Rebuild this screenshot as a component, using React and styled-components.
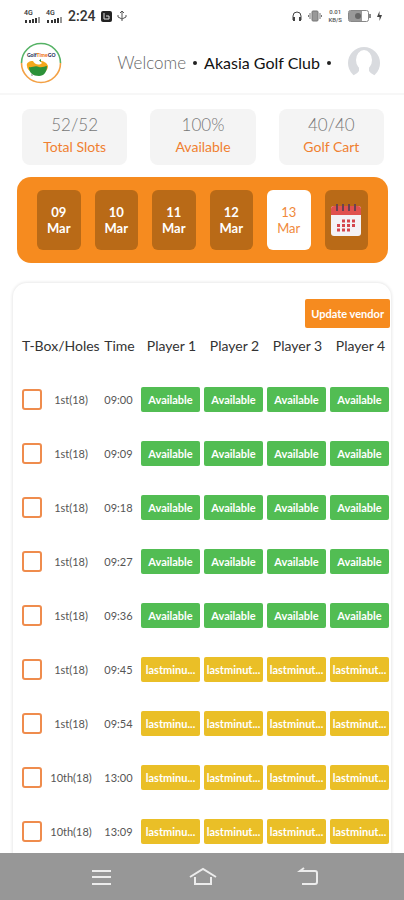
import React from 'react';
import styled, { createGlobalStyle } from 'styled-components';

const GlobalStyle = createGlobalStyle`
  * {
    box-sizing: border-box;
  }
  body {
    margin: 0;
    background: #fff;
    font-family: Lato, 'Liberation Sans', sans-serif;
    color: #333;
  }
  button {
    font-family: inherit;
    border: 0;
    padding: 0;
    cursor: pointer;
  }
`;

const Screen = styled.div`
  display: flex;
  flex-direction: column;
  height: 100vh;
`;

const StatusBar = styled.div`
  display: flex;
  align-items: center;
  justify-content: space-between;
  flex: none;
  height: 32px;
  padding: 0 22px 0 24px;
`;

const StatusGroup = styled.div`
  display: flex;
  align-items: center;
  gap: ${(props) => props.$gap}px;
  svg {
    display: block;
  }
`;

const Signal = styled.div`
  display: flex;
  flex-direction: column;
  font: 500 7px/7px Roboto, sans-serif;
  color: #333;
`;

const Clock = styled.time`
  font: 500 14px/16px Roboto, sans-serif;
  color: #333;
`;

const NetSpeed = styled.div`
  display: grid;
  font: 500 6px/8px Roboto, sans-serif;
  color: #555;
  text-align: center;
`;

const Header = styled.header`
  display: flex;
  align-items: center;
  flex: none;
  height: 63px;
  padding: 0 23px 0 20px;
  border-bottom: 2px solid #f7f7f7;
  .logo {
    display: block;
    margin-right: auto;
  }
`;

const Welcome = styled.p`
  display: flex;
  align-items: center;
  gap: 7px;
  margin: 0 16px 0 0;
  font-size: 16px;
  line-height: 20px;
  color: #111;
  span {
    font-size: 17px;
    font-weight: 300;
    color: #666;
  }
`;

const Dot = styled.i`
  width: 4px;
  height: 4px;
  border-radius: 50%;
  background: #222;
`;

const Main = styled.main`
  display: flex;
  flex-direction: column;
  flex: 1;
  min-height: 0;
  overflow-y: auto;
  scrollbar-width: none;
`;

const Stats = styled.section`
  display: grid;
  grid-template-columns: repeat(3, 1fr);
  flex: none;
  gap: 23px;
  padding: 14px 20px 12px 22px;
`;

const Stat = styled.div`
  height: 56px;
  padding-top: 5px;
  border-radius: 8px;
  background: #f4f4f4;
  text-align: center;
  strong {
    display: block;
    font-size: 17px;
    font-weight: 300;
    line-height: 22px;
    color: #777;
  }
  span {
    display: block;
    font-size: 14px;
    line-height: 22px;
    color: #f08030;
  }
`;

const DateStrip = styled.nav`
  display: grid;
  grid-template-columns: repeat(6, 1fr);
  flex: none;
  gap: 14px;
  margin: 0 16px 20px 17px;
  padding: 13px 20px;
  border-radius: 14px;
  background: #f68b1f;
`;

const Day = styled.button`
  display: flex;
  flex-direction: column;
  align-items: center;
  justify-content: center;
  height: 60px;
  border-radius: 6px;
  background: ${(props) => (props.$active ? '#fff' : '#b96a17')};
  color: ${(props) => (props.$active ? '#f0893a' : '#fff')};
  font-size: 13px;
  font-weight: ${(props) => (props.$active ? 400 : 700)};
  line-height: 16px;
`;

const Card = styled.section`
  flex: 1 0 auto;
  margin: 0 13px;
  padding: 16px 0 0 7px;
  border-radius: 14px 14px 0 0;
  box-shadow: 0 0 3px 1px #e9e9e9;
`;

const UpdateButton = styled.button`
  display: block;
  height: 29px;
  margin: 0 1px 0 auto;
  padding: 0 6px;
  border-radius: 2px;
  background: #f68b1f;
  color: #fff;
  font-size: 11px;
  font-weight: 700;
`;

const Table = styled.table`
  width: 100%;
  table-layout: fixed;
  border-collapse: collapse;
  th {
    height: 44px;
    padding: 0 0 10px 2px;
    font-size: 14px;
    font-weight: 400;
    color: #333;
    white-space: nowrap;
  }
  td {
    height: 54px;
    padding: 0 2px;
    font-size: 11px;
    color: #555;
    text-align: center;
    white-space: nowrap;
  }
`;

const Col = styled.col`
  width: ${(props) => props.$width}px;
`;

const Check = styled.input`
  appearance: none;
  display: block;
  width: 20px;
  height: 21px;
  margin: 0;
  border: 2px solid #ef8c4d;
  border-radius: 3px;
  background: #fff;
  &:checked {
    background: #f68b1f;
  }
`;

const Slot = styled.button`
  display: block;
  width: 100%;
  height: 25px;
  border-radius: 2px;
  background: ${(props) => (props.$last ? '#eabf27' : '#52bd53')};
  color: #fff;
  font-size: 11px;
  font-weight: 700;
`;

const BottomNav = styled.nav`
  display: flex;
  align-items: center;
  justify-content: center;
  flex: none;
  gap: 73px;
  height: 47px;
  background: #979797;
  button {
    width: 30px;
    height: 30px;
    background: none;
  }
  svg {
    display: block;
    fill: none;
    stroke: #ececec;
    stroke-width: 2;
  }
`;

const stats = [
  { value: '52/52', label: 'Total Slots' },
  { value: '100%', label: 'Available' },
  { value: '40/40', label: 'Golf Cart' },
];

const days = ['09', '10', '11', '12', '13'];

const rows = [
  { hole: '1st(18)', time: '09:00' },
  { hole: '1st(18)', time: '09:09' },
  { hole: '1st(18)', time: '09:18' },
  { hole: '1st(18)', time: '09:27' },
  { hole: '1st(18)', time: '09:36' },
  { hole: '1st(18)', time: '09:45', last: true },
  { hole: '1st(18)', time: '09:54', last: true },
  { hole: '10th(18)', time: '13:00', last: true },
  { hole: '10th(18)', time: '13:09', last: true },
];

const players = [1, 2, 3, 4];

function SignalIcon() {
  return (
    <Signal>
      4G
      <svg width="17" height="6" fill="#333">
        <rect x="1" y="3" width="2" height="3" />
        <rect x="5" y="3" width="2" height="3" />
        <rect x="8" y="2" width="2" height="4" />
        <rect x="11" y="1" width="2" height="5" />
        <rect x="14" y="0" width="2" height="6" fill="#999" />
      </svg>
    </Signal>
  );
}

function Logo() {
  return (
    <svg className="logo" width="42" height="42" viewBox="0 0 42 42" fill="none">
      <path d="M1.500 21a19.500 19.500 0 0 1 39 0" stroke="#55b265" strokeWidth="1.600" />
      <path d="M1.500 21a19.500 19.500 0 0 0 39 0" stroke="#f3a145" strokeWidth="1.600" />
      <text x="7" y="15" fontSize="5" fontWeight="900" fill="#222a55">
        Golf<tspan fill="#f07a22">Time</tspan><tspan fill="#222a55">GO</tspan>
      </text>
      <path d="M7 24c-1-3 2-5 6-5 1 3 6 5 9 2l-2-2c4 0 7 2 8 5 0 3-2 6-5 6H12c-3-1-5-3-5-6z" fill="#f5a81c" />
      <path d="M9 25c3 1 6-2 10 0 3 1 6-1 8-1 0 6-3 10-8 10-6 0-10-3-10-9z" fill="#2c9139" />
      <path d="M19 18.500l2-1.500v3z" fill="#2c9139" />
      <circle cx="12" cy="33" r="1" fill="#aaa" />
    </svg>
  );
}

function Avatar() {
  return (
    <svg width="34" height="34" viewBox="0 0 34 34">
      <circle cx="17" cy="17" r="16" fill="#d9dbdf" />
      <ellipse cx="17" cy="14" rx="8" ry="10" fill="#fff" />
      <path d="M12 21h10v4q1 2 5 4l2 5H5l2-5q4-2 5-4z" fill="#fff" />
    </svg>
  );
}

function CalendarIcon() {
  return (
    <svg width="30" height="32" viewBox="0 0 30 32">
      <rect y="2" width="30" height="30" rx="3" fill="#f4f2f5" />
      <path d="M0 11V5a3 3 0 0 1 3-3h24a3 3 0 0 1 3 3v6z" fill="#e0504e" />
      <path d="M6 0v7M12 0v7M18 0v7M24 0v7" stroke="#6b4150" strokeWidth="2" />
      <path d="M11 17h14M6 21.500h19M6 26h14" stroke="#d4454c" strokeWidth="3" strokeDasharray="3 2" />
    </svg>
  );
}

function App() {
  return (
    <Screen>
      <GlobalStyle />
      <StatusBar>
        <StatusGroup $gap={5}>
          <SignalIcon />
          <SignalIcon />
          <Clock>2:24</Clock>
          <svg width="11" height="11" viewBox="0 0 11 11">
            <rect width="11" height="11" rx="2" fill="#222" />
            <path d="M3 2v6h5M5 5h3v3" stroke="#ddd" fill="none" />
          </svg>
          <svg width="10" height="12" viewBox="0 0 10 12" fill="none" stroke="#555">
            <path d="M5 11V1M3 3l2-2 2 2M1 5v2l4 2 4-2V5" />
          </svg>
        </StatusGroup>
        <StatusGroup $gap={6}>
          <svg width="10" height="11" viewBox="0 0 10 11" fill="none" stroke="#444">
            <path d="M1 9V5a4 4 0 0 1 8 0v4" />
            <path d="M2 6v4M8 6v4" strokeWidth="2" />
          </svg>
          <svg width="14" height="12" viewBox="0 0 14 12" fill="#999" stroke="#777">
            <rect x="4" y="1" width="6" height="10" rx="1" />
            <path d="M2 3v6M12 3v6M.5 5v2M13.500 5v2" />
          </svg>
          <NetSpeed>
            <span>0.01</span>
            <span>KB/S</span>
          </NetSpeed>
          <svg width="23" height="12" viewBox="0 0 23 12">
            <rect x=".5" y=".5" width="20" height="11" rx="2" fill="#fff" stroke="#888" />
            <rect x="1" y="1" width="13" height="10" fill="#999" />
            <circle cx="10" cy="6" r="3" fill="#666" />
            <rect x="21" y="4" width="2" height="4" fill="#888" />
          </svg>
          <svg width="5" height="10" viewBox="0 0 5 10" fill="#444">
            <path d="M2.500 0v4H5L2.500 10V6H0z" />
          </svg>
        </StatusGroup>
      </StatusBar>
      <Header>
        <Logo />
        <Welcome>
          <span>Welcome</span>
          <Dot />
          Akasia Golf Club
          <Dot />
        </Welcome>
        <Avatar />
      </Header>
      <Main>
        <Stats>
          {stats.map((stat) => (
            <Stat key={stat.label}>
              <strong>{stat.value}</strong>
              <span>{stat.label}</span>
            </Stat>
          ))}
        </Stats>
        <DateStrip>
          {days.map((day) => (
            <Day key={day} $active={day === '13'}>
              <span>{day}</span>
              <span>Mar</span>
            </Day>
          ))}
          <Day aria-label="Pick a date">
            <CalendarIcon />
          </Day>
        </DateStrip>
        <Card>
          <UpdateButton>Update vendor</UpdateButton>
          <Table>
            <colgroup>
              <Col $width={24} />
              <Col $width={54} />
              <Col $width={41} />
              {players.map((n) => <col key={n} />)}
            </colgroup>
            <thead>
              <tr>
                <th colSpan="2">T-Box/Holes</th>
                <th>Time</th>
                {players.map((n) => <th key={n}>Player {n}</th>)}
              </tr>
            </thead>
            <tbody>
              {rows.map((row) => (
                <tr key={row.time}>
                  <td><Check type="checkbox" id={`row-${row.time}`} /></td>
                  <td><label htmlFor={`row-${row.time}`}>{row.hole}</label></td>
                  <td>{row.time}</td>
                  {players.map((n) => (
                    <td key={n}>
                      <Slot $last={row.last}>
                        {row.last ? (n === 1 ? 'lastminu...' : 'lastminut...') : 'Available'}
                      </Slot>
                    </td>
                  ))}
                </tr>
              ))}
            </tbody>
          </Table>
        </Card>
      </Main>
      <BottomNav>
        <button aria-label="Menu">
          <svg width="30" height="30" viewBox="0 0 30 30"><path d="M8 9h19M8 15h19M8 22h19" /></svg>
        </button>
        <button aria-label="Home">
          <svg width="30" height="30" viewBox="0 0 30 30"><path d="M3 15l13-8 13 8M8 15v7h16v-7" /></svg>
        </button>
        <button aria-label="Back">
          <svg width="30" height="30" viewBox="0 0 30 30"><path d="M12 22h13q2 0 2-2v-9q0-2-2-2H10l4-3" /></svg>
        </button>
      </BottomNav>
    </Screen>
  );
}

export default App;
